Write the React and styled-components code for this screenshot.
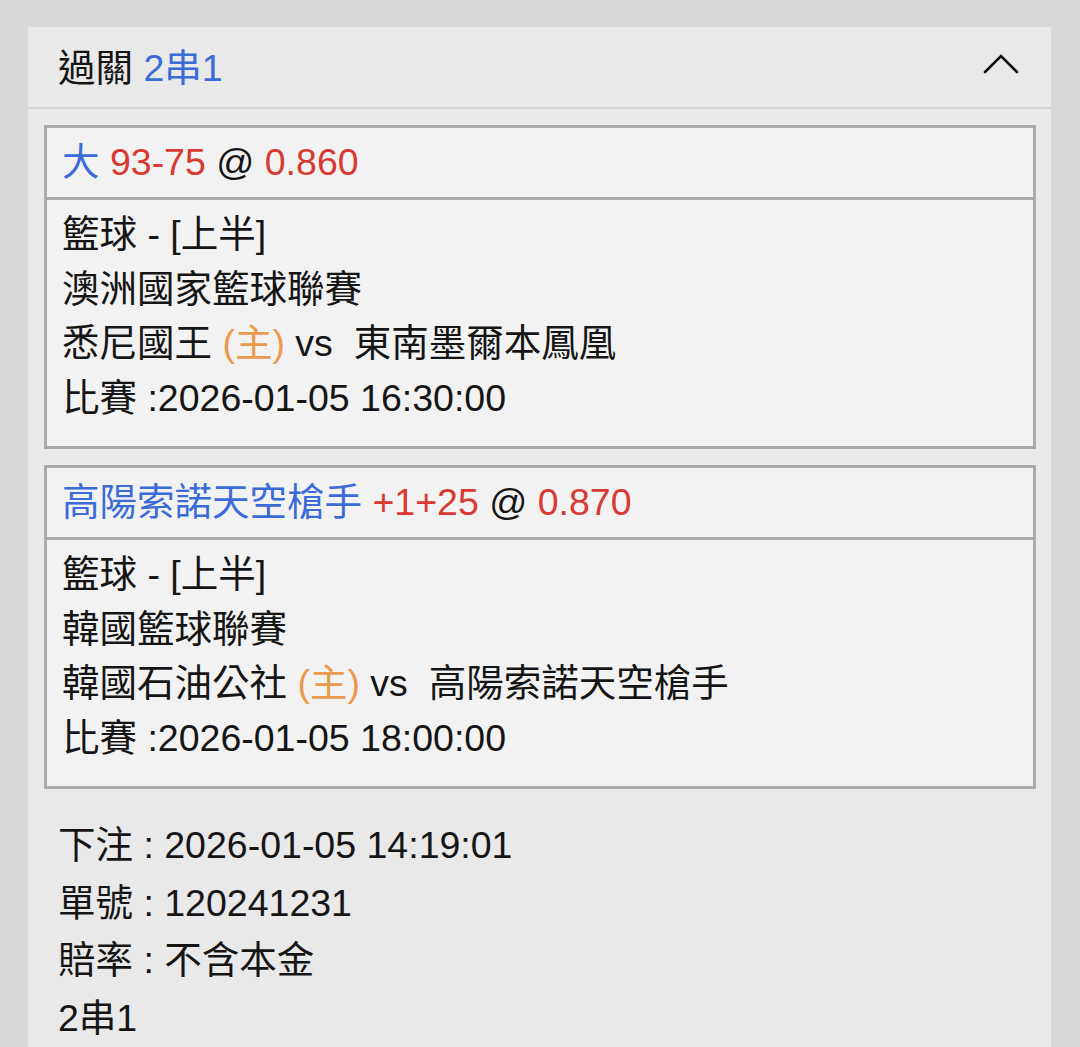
import React from "react";
import styled, { createGlobalStyle } from "styled-components";

const Global = createGlobalStyle`
  html, body { margin: 0; padding: 0; background: #d8d8d8; }
  body { font-family: "Liberation Sans", "Noto Sans CJK TC", sans-serif; color: #151515; }
`;

const Page = styled.div`
  padding: 27px 29px 0 28px;
  min-height: 1047px;
  box-sizing: border-box;
`;

const Panel = styled.section`
  background: #e9e9e9;
  min-height: 1020px;
`;

const Header = styled.div`
  display: flex;
  align-items: center;
  justify-content: space-between;
  height: 82px;
  box-sizing: border-box;
  padding: 0 32px 6px 30px;
  border-bottom: 2px solid #d3d3d3;
  font-size: 37.5px;
`;

const HeaderText = styled.span`
  white-space: pre;
`;

const Body = styled.div`
  display: flex;
  flex-direction: column;
  gap: 16px;
  padding: 16px 15px 0 16px;
`;

const Card = styled.div`
  border: 3px solid #aaaaaa;
  background: #f2f2f2;
`;

const CardTitle = styled.div`
  height: 72px;
  box-sizing: border-box;
  display: flex;
  align-items: center;
  padding: 0 15px 8px;
  font-size: 37.5px;
  border-bottom: 3px solid #aaaaaa;
`;

const TitleText = styled.span`
  white-space: pre;
`;

const CardBody = styled.div`
  padding: 7px 15px 21px;
  font-size: 37.5px;
  line-height: 54.5px;
  height: 246px;
  box-sizing: border-box;
`;

const Line = styled.div`
  white-space: pre;
`;

const C = styled.span`
  color: ${(p) => p.$c};
`;

const Footer = styled.div`
  padding: 28px 0 0 30px;
  font-size: 37.5px;
  line-height: 57.5px;
`;

const BLUE = "#3a6bd6";
const RED = "#d83a33";
const ORANGE = "#ea9a4d";

const Chevron = () => (
  <svg width="36" height="22" viewBox="0 0 36 22">
    <path d="M2 19 L18 3 L34 19" fill="none" stroke="#111" strokeWidth="2.6" strokeLinecap="round" strokeLinejoin="miter" />
  </svg>
);

const bets = [
  {
    pick: "大",
    line: "93-75",
    odds: "0.860",
    league: "澳洲國家籃球聯賽",
    home: "悉尼國王",
    away: "東南墨爾本鳳凰",
    time: "2026-01-05 16:30:00",
  },
  {
    pick: "高陽索諾天空槍手",
    line: "+1+25",
    odds: "0.870",
    league: "韓國籃球聯賽",
    home: "韓國石油公社",
    away: "高陽索諾天空槍手",
    time: "2026-01-05 18:00:00",
  },
];

export default function App() {
  return (
    <>
      <Global />
      <Page>
        <Panel>
          <Header>
            <HeaderText>
              過關{" "}<C $c={BLUE}>2串1</C>
            </HeaderText>
            <Chevron />
          </Header>
          <Body>
            {bets.map((b, i) => (
              <Card key={i}>
                <CardTitle>
                  <TitleText>
                    <C $c={BLUE}>{b.pick}</C>{" "}<C $c={RED}>{b.line}</C>{" @ "}<C $c={RED}>{b.odds}</C>
                  </TitleText>
                </CardTitle>
                <CardBody>
                  <Line>籃球 - [上半]</Line>
                  <Line>{b.league}</Line>
                  <Line>
                    {b.home}{" "}<C $c={ORANGE}>(主)</C>{" vs  "}{b.away}
                  </Line>
                  <Line>比賽 :{b.time}</Line>
                </CardBody>
              </Card>
            ))}
          </Body>
          <Footer>
            <Line>下注 : 2026-01-05 14:19:01</Line>
            <Line>單號 : 120241231</Line>
            <Line>賠率 : 不含本金</Line>
            <Line>2串1</Line>
          </Footer>
        </Panel>
      </Page>
    </>
  );
}
